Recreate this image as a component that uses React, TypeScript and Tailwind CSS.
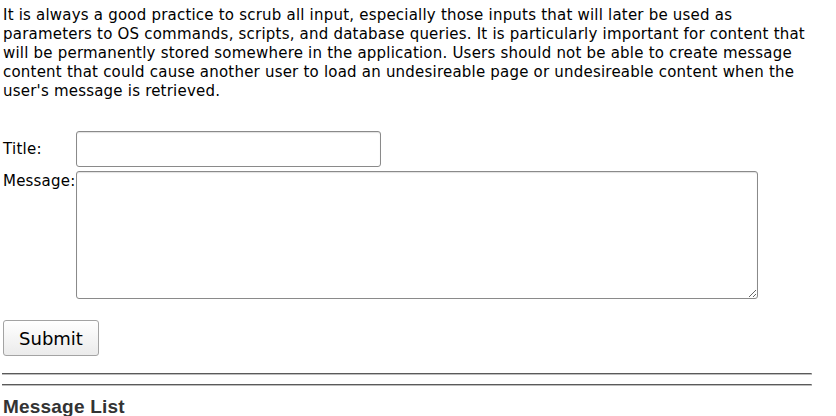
export default function App() {
  return (
    <div className="w-[812px] pl-[2px] bg-white text-black font-['DejaVu_Sans',sans-serif]">
      <p className="pt-[6px] pl-[1px] text-[15px] leading-[19px] tracking-[0.21px]">
        It is always a good practice to scrub all input, especially those inputs that will later be used as
        parameters to OS commands, scripts, and database queries. It is particularly important for content that
        will be permanently stored somewhere in the application. Users should not be able to create message
        content that could cause another user to load an undesireable page or undesireable content when the
        user's message is retrieved.
      </p>

      <form className="mt-[30px] pl-[1px]" onSubmit={(e) => e.preventDefault()}>
        <div className="flex items-center">
          <label className="w-[73px] text-[15px] leading-[19px] tracking-[0.27px]">Title:</label>
          <input
            type="text"
            className="h-[36px] w-[305px] rounded-[3px] border border-[#8a8a8a] bg-white shadow-[inset_0_1px_1px_rgba(0,0,0,0.12)] outline-none"
          />
        </div>
        <div className="mt-[4px] flex items-start">
          <label className="w-[73px] pt-[1px] text-[15px] leading-[19px] tracking-[0.2px]">Message:</label>
          <textarea className="h-[128px] w-[682px] rounded-[3px] border border-[#8a8a8a] bg-white shadow-[inset_0_1px_1px_rgba(0,0,0,0.12)] outline-none" />
        </div>
        <button
          type="submit"
          className="mt-[21px] h-[36px] w-[96px] rounded-[3px] border border-[#a3a3a3] bg-gradient-to-b from-white to-[#ebebeb] pt-[2px] text-[18px] leading-none text-black"
        >
          Submit
        </button>
      </form>

      <div className="mt-[17px] h-[2px] border-t border-r border-b border-t-[#5a5a5a] border-r-[#bdbdbd] border-b-[#bdbdbd]" />
      <div className="mt-[9px] h-[2px] border-t border-r border-b border-t-[#5a5a5a] border-r-[#bdbdbd] border-b-[#bdbdbd]" />

      <h3 className="mt-[9px] pl-[1px] font-['Liberation_Sans',Arial,sans-serif] text-[19px] font-bold leading-[24px] tracking-[0.2px] text-[#333]">
        Message List
      </h3>
    </div>
  );
}
